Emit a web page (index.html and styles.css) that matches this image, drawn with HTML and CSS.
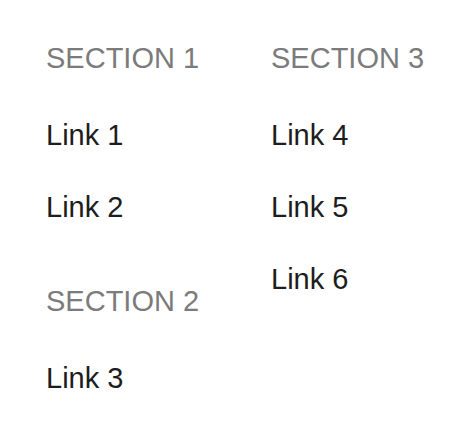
FILE: index.html
```html
<!DOCTYPE html>
<html lang="en">
<head>
  <meta charset="UTF-8">
  <title>Menu</title>
  <link rel="stylesheet" href="styles.css">
</head>
<body>
  <nav class="menu">
    <div class="column">
      <div class="section">
        <h2>SECTION 1</h2>
        <ul>
          <li><a href="#">Link 1</a></li>
          <li><a href="#">Link 2</a></li>
        </ul>
      </div>
      <div class="section">
        <h2>SECTION 2</h2>
        <ul>
          <li><a href="#">Link 3</a></li>
        </ul>
      </div>
    </div>
    <div class="column">
      <div class="section">
        <h2>SECTION 3</h2>
        <ul>
          <li><a href="#">Link 4</a></li>
          <li><a href="#">Link 5</a></li>
          <li><a href="#">Link 6</a></li>
        </ul>
      </div>
    </div>
  </nav>
</body>
</html>
```

FILE: styles.css
```css
body {
  margin: 0;
  background: #fff;
  font-family: "Liberation Sans", Arial, sans-serif;
  font-size: 29px;
}
.menu {
  display: grid;
  grid-template-columns: 225px 1fr;
  padding-left: 46px;
}
.section {
  padding-top: 40px;
}
h2 {
  margin: 0 0 23px;
  font-size: 1em;
  font-weight: normal;
  line-height: 36px;
  color: #7b7b7b;
}
ul {
  margin: 0;
  padding: 0;
  list-style: none;
}
li {
  line-height: 72px;
}
a {
  color: #1d1d1d;
  text-decoration: none;
}
```
